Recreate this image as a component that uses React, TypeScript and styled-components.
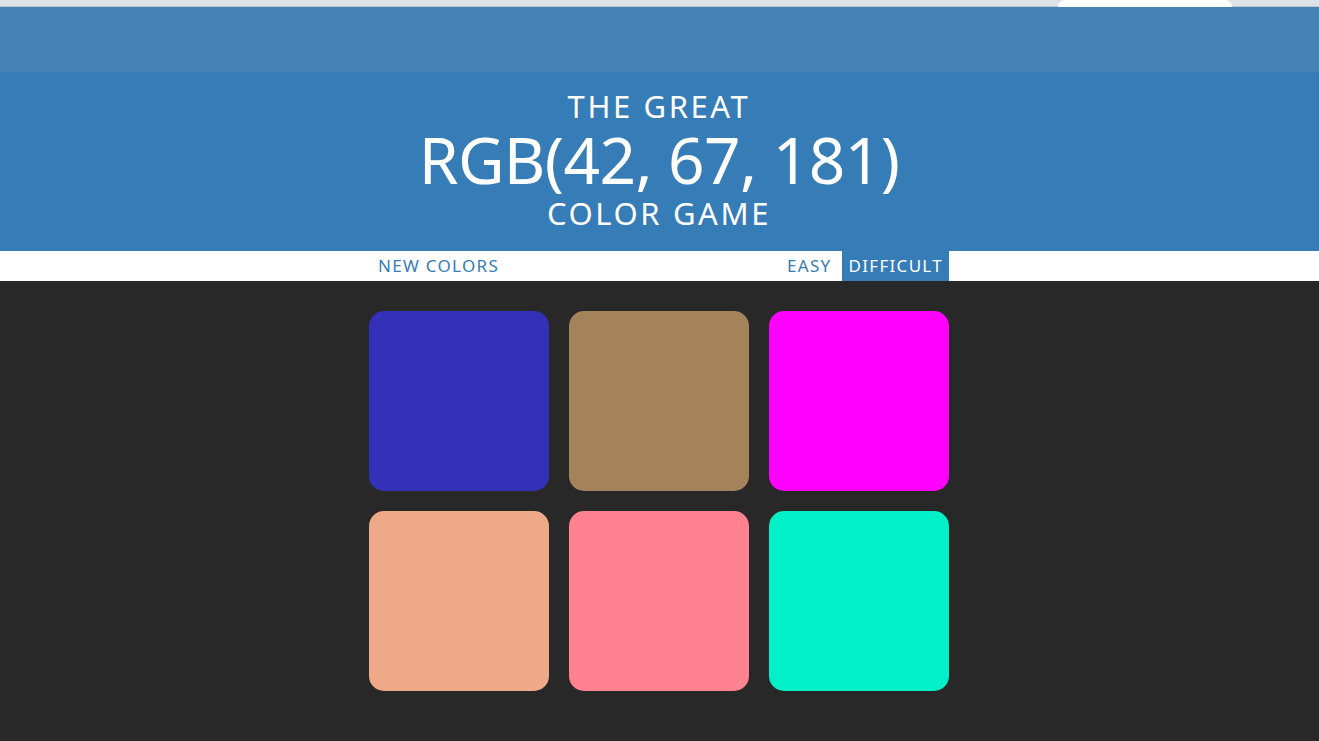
import React from "react";
import styled, { createGlobalStyle } from "styled-components";

const Global = createGlobalStyle`
  html, body { margin: 0; padding: 0; background: #282828; }
  body { font-family: "Noto Sans", "Open Sans", sans-serif; }
  #root { min-height: 741px; }
`;

const TabStrip = styled.div`
  height: 7px;
  background: #dee1e6;
  display: flex;
  justify-content: flex-end;
  padding-right: 87px;
  border-bottom: 1px solid #b9c6d3;
  box-sizing: border-box;
`;

const Tab = styled.div`
  width: 174px;
  height: 7px;
  background: #ffffff;
  border-radius: 9px 9px 0 0;
`;

const Band = styled.div`
  height: 65px;
  background: #4682b4;
`;

const Header = styled.h1`
  margin: 0;
  height: 179px;
  background: #367cb7;
  color: #ffffff;
  font-weight: 400;
  text-align: center;
  text-transform: uppercase;
  box-sizing: border-box;
  padding-top: 16px;
  padding-right: 1px;
`;

const Line = styled.span<{ $size: number; $lh: number; $ls?: number }>`
  display: block;
  font-size: ${(p) => p.$size}px;
  line-height: ${(p) => p.$lh}px;
  letter-spacing: ${(p) => p.$ls ?? 0}px;
`;

const Nav = styled.div`
  background: #ffffff;
  height: 30px;
  display: flex;
  justify-content: center;
  padding-right: 1px;
`;

const NavInner = styled.div`
  width: 580px;
  display: flex;
  align-items: stretch;
  gap: 4px;
`;

const NavButton = styled.button<{ $active?: boolean; $lead?: boolean }>`
  border: none;
  background: ${(p) => (p.$active ? "#367cb7" : "#ffffff")};
  color: ${(p) => (p.$active ? "#ffffff" : "#367cb7")};
  font-family: "Noto Sans", "Open Sans", sans-serif;
  font-size: 17px;
  letter-spacing: 1.3px;
  text-transform: uppercase;
  padding: 0 6px 0 ${(p) => (p.$lead ? 9 : 7)}px;
  margin: 0;
  cursor: pointer;
  height: 30px;
  line-height: 30px;
`;

const Spacer = styled.div`
  flex: 1;
`;

const Board = styled.div`
  display: grid;
  grid-template-columns: repeat(3, 180px);
  gap: 20px;
  justify-content: center;
  padding: 30px 1px 0 0;
`;

const Square = styled.div<{ $color: string }>`
  width: 180px;
  height: 180px;
  border-radius: 15px;
  background: ${(p) => p.$color};
`;

const colors = ["#3431b8", "#a5835a", "#ff00ff", "#eda988", "#ff8291", "#00f0c8"];

export default function App() {
  return (
    <>
      <Global />
      <TabStrip>
        <Tab />
      </TabStrip>
      <Band />
      <Header>
        <Line $size={31} $lh={37} $ls={2.6}>The Great</Line>
        <Line $size={64} $lh={70} $ls={-0.6}>RGB(42, 67, 181)</Line>
        <Line $size={31} $lh={37} $ls={2.6}>Color Game</Line>
      </Header>
      <Nav>
        <NavInner>
          <NavButton $lead>New Colors</NavButton>
          <Spacer />
          <NavButton>Easy</NavButton>
          <NavButton $active>Difficult</NavButton>
        </NavInner>
      </Nav>
      <Board>
        {colors.map((c, i) => (
          <Square key={i} $color={c} />
        ))}
      </Board>
    </>
  );
}
